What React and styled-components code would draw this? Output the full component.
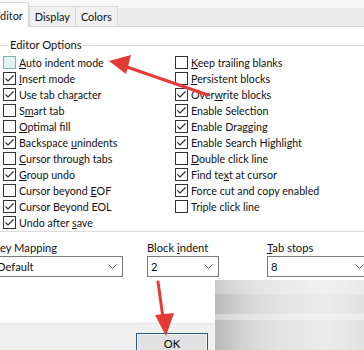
import React from 'react'
import styled, { createGlobalStyle } from 'styled-components'

const leftOptions = [
  { pre: '', key: 'A', post: 'uto indent mode', on: false, hover: true },
  { pre: '', key: 'I', post: 'nsert mode', on: true },
  { pre: 'Use tab cha', key: 'r', post: 'acter', on: true },
  { pre: 'S', key: 'm', post: 'art tab', on: false },
  { pre: '', key: 'O', post: 'ptimal fill', on: false },
  { pre: 'Backspace ', key: 'u', post: 'nindents', on: true },
  { pre: '', key: 'C', post: 'ursor through tabs', on: false },
  { pre: '', key: 'G', post: 'roup undo', on: true },
  { pre: 'Cursor beyond ', key: 'E', post: 'OF', on: false },
  { pre: 'Cursor Beyond EOL', key: '', post: '', on: true },
  { pre: 'Undo after ', key: 's', post: 'ave', on: true },
]

const rightOptions = [
  { pre: '', key: 'K', post: 'eep trailing blanks', on: false },
  { pre: '', key: 'P', post: 'ersistent blocks', on: false },
  { pre: 'Over', key: 'w', post: 'rite blocks', on: true },
  { pre: 'Enable Selection', key: '', post: '', on: true },
  { pre: 'Enable Dragging', key: '', post: '', on: true },
  { pre: 'Enable Search Highlight', key: '', post: '', on: true },
  { pre: '', key: 'D', post: 'ouble click line', on: false },
  { pre: 'Find te', key: 'x', post: 't at cursor', on: true },
  { pre: 'Force cut and copy enabled', key: '', post: '', on: true },
  { pre: 'Triple click line', key: '', post: '', on: false },
]

const Check = ({ on, hover }) => (
  <Box $hover={hover}>
    {on && (
      <svg width="11" height="11" viewBox="0 0 11 11">
        <path d="M1.5 5.5 L4 8 L9.5 2.5" fill="none" stroke="#262626" strokeWidth="1.1" />
      </svg>
    )}
  </Box>
)

const Option = ({ item }) => (
  <Row>
    <Check on={item.on} hover={item.hover} />
    <span>
      {item.pre}
      {item.key && <u>{item.key}</u>}
      {item.post}
    </span>
  </Row>
)

const Chevron = () => (
  <svg width="9" height="6" viewBox="0 0 9 6">
    <path d="M0.5 0.5 L4.5 4.5 L8.5 0.5" fill="none" stroke="#606060" strokeWidth="1" />
  </svg>
)

const App = () => {
  return (
    <Dialog>
      <Global />
      <Shift>
        <TabStrip>
          <Tab $active>Editor</Tab>
          <Tab>Display</Tab>
          <Tab>Colors</Tab>
        </TabStrip>
        <Page>
          <Group>
            <Legend>Editor Options</Legend>
            <Columns>
              <Column $width="172px">
                {leftOptions.map((o, i) => <Option key={i} item={o} />)}
              </Column>
              <Column>
                {rightOptions.map((o, i) => <Option key={i} item={o} />)}
              </Column>
            </Columns>
          </Group>
          <Fields>
            <Field $width="130px">
              <Label>Key Mapping</Label>
              <Combo>Default<Chevron /></Combo>
            </Field>
            <Field $width="72px" $gap="24px">
              <Label>Block <u>i</u>ndent</Label>
              <Combo>2<Chevron /></Combo>
            </Field>
            <Field $width="103px" $gap="48px">
              <Label><u>T</u>ab stops</Label>
              <Combo>8<Chevron /></Combo>
            </Field>
          </Fields>
        </Page>
        <ButtonBar>
          <OkButton>OK</OkButton>
        </ButtonBar>
      </Shift>
      <Mosaic />
      <Arrows width="364" height="350" viewBox="0 0 364 350">
        <line x1="124" y1="66" x2="208" y2="95" stroke="#e53a35" strokeWidth="3" strokeLinecap="round" />
        <polygon points="109,61 131,55 126,74" fill="#e53a35" />
        <line x1="158" y1="282" x2="163" y2="318" stroke="#e53a35" strokeWidth="3" strokeLinecap="round" />
        <polygon points="155,315 174,313 166,336" fill="#e53a35" />
      </Arrows>
    </Dialog>
  )
}

export default App

const Global = createGlobalStyle`
html, body {
  margin: 0;
  padding: 0;
}
body {
  width: 364px;
  height: 350px;
  overflow: hidden;
  background: #f0f0f0;
  font-family: Lato, "Noto Sans", sans-serif;
  font-size: 10.7px;
  color: #111;
}
`

const Dialog = styled.div`
position: relative;
width: 364px;
height: 350px;
overflow: hidden;
display: flex;
`

const Shift = styled.div`
flex: none;
margin-left: -10px;
width: 400px;
display: flex;
flex-direction: column;
`

const TabStrip = styled.div`
height: 26px;
margin-left: -2px;
display: flex;
align-items: flex-end;
background: linear-gradient(#f7f7f7 0 8px, #ececec 8px);
`

const Tab = styled.div`
box-sizing: border-box;
height: ${p => (p.$active ? '25px' : '20px')};
margin-bottom: ${p => (p.$active ? '-1px' : '0')};
padding: 0 5px;
display: flex;
align-items: center;
font-size: 10.9px;
background: ${p => (p.$active ? '#fff' : '#f0f0f0')};
border: 1px solid #d9d9d9;
border-bottom: none;
margin-right: ${p => (p.$active ? '0' : '-1px')};
position: relative;
z-index: ${p => (p.$active ? 1 : 0)};
`

const Page = styled.div`
flex: 1;
background: #fff;
border-top: 1px solid #d9d9d9;
display: flex;
flex-direction: column;
`

const Group = styled.fieldset`
margin: 10px 0 0 5px;
padding: 1px 0 1px 7px;
border: 1px solid #dcdcdc;
`

const Legend = styled.legend`
padding: 0 1px;
margin-left: 6px;
line-height: 16px;
font-size: 11.2px;
`

const Columns = styled.div`
display: flex;
`

const Column = styled.div`
width: ${p => p.$width || 'auto'};
display: flex;
flex-direction: column;
`

const Row = styled.div`
height: 16px;
display: flex;
align-items: center;
gap: 3px;
white-space: nowrap;
`

const Box = styled.div`
box-sizing: border-box;
width: 13px;
height: 13px;
flex: none;
display: flex;
align-items: center;
justify-content: center;
border: 1px solid ${p => (p.$hover ? '#7fb3b0' : '#333')};
background: ${p => (p.$hover ? '#e2f2f0' : '#fff')};
`

const Fields = styled.div`
display: flex;
margin-top: 8px;
padding-left: 3px;
`

const Field = styled.div`
flex: none;
width: ${p => p.$width};
margin-left: ${p => p.$gap || '0'};
display: flex;
flex-direction: column;
`

const Label = styled.div`
line-height: 16px;
height: 16px;
white-space: nowrap;
font-size: 11.2px;
`

const Combo = styled.div`
box-sizing: border-box;
height: 21px;
border: 1px solid #7a7a7a;
background: #fff;
display: flex;
align-items: center;
justify-content: space-between;
padding: 0 5px 0 3px;
font-size: 11.2px;
`

const ButtonBar = styled.div`
height: 27px;
background: #f0f0f0;
border-top: 1px solid #e3e3e3;
display: flex;
align-items: flex-start;
padding-left: 146px;
padding-top: 9px;
box-sizing: border-box;
`

const OkButton = styled.button`
box-sizing: border-box;
width: 72px;
height: 24px;
flex: none;
padding: 0 0 3px;
font: inherit;
font-size: 11.2px;
color: #000;
background: #e1e1e1;
border: 1px solid #1f5f8b;
box-shadow: inset 0 0 0 1px #f3f7fa;
`

const Mosaic = styled.div`
position: absolute;
left: 215px;
top: 280px;
width: 149px;
height: 70px;
background:
  linear-gradient(180deg, rgba(255,255,255,0.25) 0 14px, rgba(255,255,255,0) 14px 34px, rgba(255,255,255,0.35) 34px 40px, rgba(255,255,255,0) 40px),
  linear-gradient(90deg, #b9b9b9 0, #c2c2c2 10px, #d0d0d0 24px, #dadada 40px, #e4e4e4 70px, #ebebeb 110px, #e2e2e2 149px);
`

const Arrows = styled.svg`
position: absolute;
left: 0;
top: 0;
pointer-events: none;
`
